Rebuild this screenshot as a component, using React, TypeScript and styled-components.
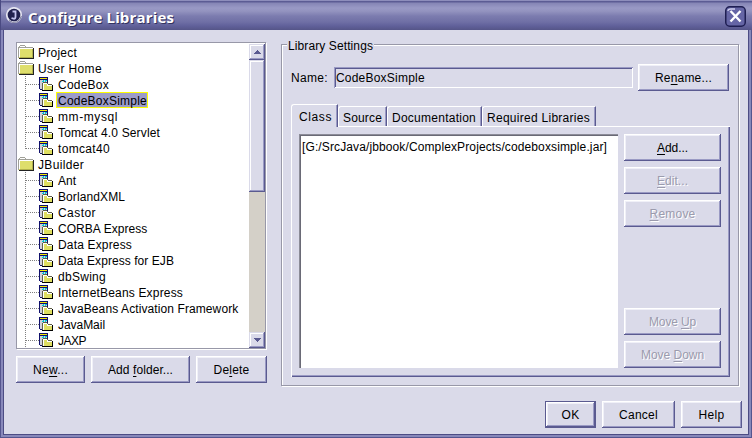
import React from "react";
import styled, { createGlobalStyle, css } from "styled-components";

const c = {
  face: "#dadae9",
  dark: "#5a5a90",
  mid: "#9a9ac4",
  grey: "#9898a8",
  yellow: "#ffff00",
};

const Global = createGlobalStyle`
  * { box-sizing: border-box; }
  body { margin: 0; overflow: hidden; }
`;

/* ---------- text ---------- */

const TextSpan = styled.span`
  display: inline-block;
  white-space: pre;
  text-align: left;
`;
const Mnemonic = styled.span`
  text-decoration: underline;
  text-decoration-thickness: 1px;
  text-underline-offset: 2px;
  text-decoration-skip-ink: none;
`;

const BODY_FONT = '12px "Liberation Sans"';
const canvas = document.createElement("canvas").getContext("2d")!;

/* Tracks a string out so it fills the given advance; "_" marks the mnemonic letter. */
function Text({ children, w, font = BODY_FONT }: { children: string; w: number; font?: string }) {
  const at = children.indexOf("_");
  const plain = children.replace("_", "");
  canvas.font = font;
  const spacing = (w - canvas.measureText(plain).width) / plain.length;
  return (
    <TextSpan style={{ letterSpacing: `${spacing.toFixed(3)}px`, width: w }}>
      {at < 0 ? plain : (
        <>
          {plain.slice(0, at)}
          <Mnemonic>{plain[at]}</Mnemonic>
          {plain.slice(at + 1)}
        </>
      )}
    </TextSpan>
  );
}

/* ---------- window ---------- */

const Window = styled.div`
  width: 752px;
  height: 438px;
  display: grid;
  grid-template-rows: 30px 1fr;
  background: ${c.face};
  font: 12px "Liberation Sans", Arial, sans-serif;
  color: #000;
  overflow: hidden;
`;
const TitleBar = styled.header`
  display: flex;
  align-items: center;
  padding: 2px 6px 0 5px;
  border-left: 1px solid #4a4a82;
  background: linear-gradient(to bottom, #8e8ebc 0, #8e8ebc 1px, #5c5c94 1px, #5c5c94 2px, #8585b5 3px, #9999c5 8px, #9494c0 11px, #7c7caf 16px, #6f6fa5 22px, #60609a 26px, #555588 30px);
`;
const Title = styled.h1`
  margin: 0 auto 0 5px;
  font: bold 15px/20px "Open Sans", "Noto Sans", sans-serif;
  color: #fff;
  text-shadow: 1px 1px 0 #33335f;
  padding-top: 1px;
`;
const CloseButton = styled.button`
  display: block;
  width: 21px;
  height: 21px;
  padding: 0;
  border: 0;
  background: none;
`;
const Frame = styled.div`
  border: solid #55558f;
  border-width: 0 1px 1px;
  background: #8888ba;
  padding: 0 2px 2px;
  min-height: 0;
`;
const Body = styled.main`
  height: 100%;
  border: 1px solid #4c4c84;
  border-top: 0;
  background: ${c.face};
  padding: 12px 7px 0 12px;
  display: grid;
  grid-template-columns: 251px 459px;
  grid-template-rows: 345px 41px;
  column-gap: 14px;
`;

/* ---------- buttons ---------- */

const Button = styled.button<{ $w: number; $default?: boolean; $off?: boolean }>`
  width: ${(p) => p.$w}px;
  height: 27px;
  flex: none;
  padding: 2px 0 0;
  margin: 0;
  border: 0;
  background: ${c.face};
  font: inherit;
  line-height: 23px;
  text-align: center;
  color: #000;
  box-shadow: inset -1px -1px ${c.dark}, inset 1px 1px #fff, inset -2px -2px ${c.mid}, inset 2px 2px #f0f0f8;
  ${(p) => p.$default && css`
    box-shadow: inset 0 0 0 1px ${c.dark}, inset -2px -2px ${c.dark}, inset 2px 2px #fff, inset -3px -3px ${c.mid}, inset 3px 3px #f0f0f8;
  `}
  ${(p) => p.$off && css`
    color: #9b9bad;
    text-shadow: 1px 1px #fff;
  `}
`;
const ButtonRow = styled.div`
  display: flex;
  gap: 6px;
`;
const Footer = styled(ButtonRow)`
  grid-column: 1 / -1;
  justify-content: flex-end;
  padding: 14px 0 0;
  margin-right: -2px;
`;

/* ---------- tree ---------- */

const Left = styled.section`
  display: grid;
  grid-template-rows: 308px 27px;
  row-gap: 6px;
`;
const TreePane = styled.div`
  display: grid;
  grid-template-columns: 1fr 16px;
  background: #fff;
  border: 1px solid ${c.grey};
  box-shadow: 1px 1px #fff;
  width: 250px;
  height: 307px;
  padding-top: 1px;
  overflow: hidden;
`;
const Tree = styled.ul`
  margin: 0;
  padding: 0;
  list-style: none;
  height: 304px;
  overflow: hidden;
`;
const TreeRow = styled.li`
  height: 16px;
  display: flex;
  align-items: center;
  padding-left: 1px;
  svg { flex: none; display: block; }
`;
const RowLabel = styled.span<{ $selected?: boolean; $root?: boolean }>`
  height: 16px;
  line-height: 16px;
  padding: 1px 1px 0 ${(p) => (p.$root ? 0 : 2)}px;
  white-space: nowrap;
  ${(p) => p.$selected && css`
    background: #9c9cc9;
    box-shadow: inset 0 0 0 1px ${c.yellow};
  `}
`;
const ScrollBar = styled.div`
  display: flex;
  flex-direction: column;
  background: #d4d0c8;
  height: 304px;
`;
const Bevel = styled.div<{ $h: number }>`
  height: ${(p) => p.$h}px;
  flex: none;
  background: ${c.face};
  box-shadow: inset -1px -1px ${c.dark}, inset 1px 1px ${c.face}, inset -2px -2px ${c.mid}, inset 2px 2px #fff;
  svg { display: block; }
`;
const Track = styled.div`
  flex: 1;
`;

function Folder() {
  return (
    <svg width="20" height="16" shapeRendering="crispEdges">
      <path d="M1 14V3H2V2H7V4H15V14Z" fill="#dede6c" />
      <path d="M0 14V3H1V2H2V1H7V2H8V3H15V4H1V14Z" fill="#a0a098" />
      <path d="M2 2h5v1H2zM1 4h14v1H1zM1 4h1v9H1z" fill="#fff" />
      <path d="M1 14h15v1H1zM15 4h1v11h-1z" fill="#222" />
      <path d="M2 13h13v1H2zM14 5h1v9h-1z" fill="#b0b04c" />
    </svg>
  );
}

function Library({ last }: { last: boolean }) {
  return (
    <svg width="38" height="16" shapeRendering="crispEdges">
      <path d={last ? "M7.5 0V9" : "M7.5 0V16"} stroke="#808080" strokeDasharray="1 1" />
      <path d="M8 8.5H21" stroke="#808080" strokeDasharray="1 1" />
      <path d="M21 1h9v6h-6v7h-2v-1h-1z" fill="#10106c" />
      <path d="M22 4h7v3h-5v6h-2z" fill="#d0d0d8" />
      <path d="M22 2h7v1h-7z" fill="#f4e800" />
      <path d="M25 4h1v1h-1zM27 4h2v1h-2zM24 5h2v1h-2zM27 5h1v1h-1z" fill="#00c8d8" />
      <path d="M25 8h4v2h5v4h-9z" fill="#dede60" />
      <path d="M25 6h4v1h-4zM24 7h1v7h-1zM29 7h1v1h-1zM30 8h4v1h-4z" fill="#606048" />
      <path d="M25 7h4v1h-4zM25 8h1v6h-1zM29 8h1v1h-1zM29 9h5v1h-5z" fill="#fff" />
      <path d="M24 14h11v1H24zM34 9h1v6h-1z" fill="#000" />
    </svg>
  );
}

type Item = { name: string; w: number; folder?: boolean; last?: boolean; selected?: boolean };
const items: Item[] = [
  { name: "Project", w: 39, folder: true },
  { name: "User Home", w: 64, folder: true },
  { name: "CodeBox", w: 51 },
  { name: "CodeBoxSimple", w: 89, selected: true },
  { name: "mm-mysql", w: 60 },
  { name: "Tomcat 4.0 Servlet", w: 102 },
  { name: "tomcat40", w: 52, last: true },
  { name: "JBuilder", w: 46, folder: true },
  { name: "Ant", w: 18 },
  { name: "BorlandXML", w: 67 },
  { name: "Castor", w: 38 },
  { name: "CORBA Express", w: 90 },
  { name: "Data Express", w: 74 },
  { name: "Data Express for EJB", w: 116 },
  { name: "dbSwing", w: 48 },
  { name: "InternetBeans Express", w: 125 },
  { name: "JavaBeans Activation Framework", w: 181 },
  { name: "JavaMail", w: 47 },
  { name: "JAXP", w: 28 },
];

/* ---------- settings group ---------- */

const Group = styled.fieldset`
  min-width: 0;
  margin: -3px 0 0;
  padding: 0;
  height: 346px;
  width: 459px;
  border: 0;
  display: block;
  position: relative;
`;
const GroupLine = styled.div`
  height: 342px;
  margin-top: 5px;
  border: 1px solid ${c.grey};
  box-shadow: inset 1px 1px #fff, 1px 1px #fff;
  width: 458px;
  padding: 19px 9px 0;
`;
const GroupTitle = styled.div`
  position: absolute;
  left: 6px;
  top: 0;
  line-height: 15px;
  padding: 0 1px;
  background: ${c.face};
`;
const NameRow = styled.div`
  display: flex;
  height: 27px;
  align-items: flex-start;
`;
const NameLabel = styled.label`
  width: 43px;
  line-height: 16px;
  padding-top: 6px;
`;
const Field = styled.div`
  width: 300px;
  height: 21px;
  margin: 3px 5px 0 0;
  padding: 3px 2px 0;
  line-height: 16px;
  box-shadow: inset 1px 1px ${c.mid}, inset -1px -1px #fff, inset 2px 2px ${c.dark};
`;
const Tabs = styled.div`
  display: flex;
  align-items: flex-end;
  height: 22px;
  margin-top: 13px;
`;
const Tab = styled.div<{ $w: number; $active?: boolean }>`
  width: ${(p) => p.$w}px;
  height: ${(p) => (p.$active ? 23 : 20)}px;
  margin-bottom: ${(p) => (p.$active ? -1 : 0)}px;
  border: solid #fff;
  border-width: 1px 0 0 1px;
  border-right: 1px solid ${c.dark};
  border-top-left-radius: 3px;
  box-shadow: inset -1px 0 ${c.mid};
  background: ${c.face};
  line-height: 16px;
  padding: ${(p) => (p.$active ? "4px 0 0 7px" : "3px 0 0 4px")};
  position: relative;
  z-index: ${(p) => (p.$active ? 1 : 0)};
`;
const TabPane = styled.div`
  width: 439px;
  height: 251px;
  padding: 8px 9px 0 8px;
  display: flex;
  justify-content: space-between;
  box-shadow: inset 1px 1px #fff, inset -1px -1px ${c.dark}, inset -2px -2px ${c.mid};
`;
const List = styled.div`
  width: 319px;
  height: 234px;
  background: #fff;
  border: solid #8c8c98;
  border-width: 1px 0 0 1px;
  box-shadow: inset 1px 1px #6a6a76;
  padding: 4px 2px;
  line-height: 16px;
`;
const Actions = styled.div`
  display: flex;
  flex-direction: column;
  gap: 6px;
  height: 234px;
`;
const Gap = styled.div`
  flex: 1;
`;

export default function App() {
  return (
    <>
      <Global />
      <Window>
        <TitleBar>
          <svg width="17" height="18" viewBox="0 0 17 18">
            <circle cx="8" cy="8" r="7.2" fill="#20204f" stroke="#e4e4f0" strokeWidth="1.7" />
            <path d="M3 13.5A7.4 7.4 0 0 0 15.3 9" fill="none" stroke="#777798" />
            <path d="M6.5 4.5H9.5V9.5Q9.5 12 7.5 11.7L5.5 11" fill="none" stroke="#c4c4f0" strokeWidth="1.8" />
          </svg>
          <Title><Text w={146} font='bold 15px "Open Sans"'>Configure Libraries</Text></Title>
          <CloseButton aria-label="Close">
            <svg width="21" height="21">
              <rect x=".75" y=".75" width="19.5" height="19.5" rx="4" fill="#6565a5" stroke="#1e1e52" strokeWidth="1.5" />
              <path d="M3 5Q3 3 6 3H10" fill="none" stroke="#d0d0ee" strokeWidth="1.4" />
              <path d="M5.5 5L15.5 15.5M15.5 5L5.5 15.5" stroke="#fff" strokeWidth="2.4" />
            </svg>
          </CloseButton>
        </TitleBar>
        <Frame>
          <Body>
            <Left>
              <TreePane>
                <Tree>
                  {items.map((it) => (
                    <TreeRow key={it.name}>
                      {it.folder ? <Folder /> : <Library last={!!it.last} />}
                      <RowLabel $selected={it.selected} $root={it.folder}><Text w={it.w}>{it.name}</Text></RowLabel>
                    </TreeRow>
                  ))}
                </Tree>
                <ScrollBar>
                  <Bevel $h={16}>
                    <svg width="16" height="16" shapeRendering="crispEdges"><path d="M8 6h1v1h1v1h1v1h1v1H5V9h1V8h1V7h1z" fill={c.dark} /></svg>
                  </Bevel>
                  <Bevel $h={132} />
                  <Track />
                  <Bevel $h={16}>
                    <svg width="16" height="16" shapeRendering="crispEdges"><path d="M5 6h7v1h-1v1h-1v1H9v1H8V9H7V8H6V7H5z" fill={c.dark} /></svg>
                  </Bevel>
                </ScrollBar>
              </TreePane>
              <ButtonRow>
                <Button $w={69}><Text w={35}>Ne_w...</Text></Button>
                <Button $w={99}><Text w={65}>Add _folder...</Text></Button>
                <Button $w={71}><Text w={36}>De_lete</Text></Button>
              </ButtonRow>
            </Left>
            <Group>
              <GroupLine>
                <NameRow>
                  <NameLabel><Text w={37}>Name:</Text></NameLabel>
                  <Field><Text w={89}>CodeBoxSimple</Text></Field>
                  <Button $w={91}><Text w={57}>Re_name...</Text></Button>
                </NameRow>
                <Tabs>
                  <Tab $w={47} $active><Text w={33}>Class</Text></Tab>
                  <Tab $w={49}><Text w={39}>Source</Text></Tab>
                  <Tab $w={95}><Text w={84}>Documentation</Text></Tab>
                  <Tab $w={114}><Text w={103}>Required Libraries</Text></Tab>
                </Tabs>
                <TabPane>
                  <List><Text w={305}>[G:/SrcJava/jbbook/ComplexProjects/codeboxsimple.jar]</Text></List>
                  <Actions>
                    <Button $w={97}><Text w={31}>_Add...</Text></Button>
                    <Button $w={97} $off><Text w={31}>_Edit...</Text></Button>
                    <Button $w={97} $off><Text w={46}>_Remove</Text></Button>
                    <Gap />
                    <Button $w={97} $off><Text w={47}>Move _Up</Text></Button>
                    <Button $w={97} $off><Text w={63}>Move _Down</Text></Button>
                  </Actions>
                </TabPane>
              </GroupLine>
              <GroupTitle><Text w={85}>Library Settings</Text></GroupTitle>
            </Group>
            <Footer>
              <Button $w={51} $default><Text w={18}>OK</Text></Button>
              <Button $w={73}><Text w={39}>Cancel</Text></Button>
              <Button $w={61}><Text w={26}>Help</Text></Button>
            </Footer>
          </Body>
        </Frame>
      </Window>
    </>
  );
}
